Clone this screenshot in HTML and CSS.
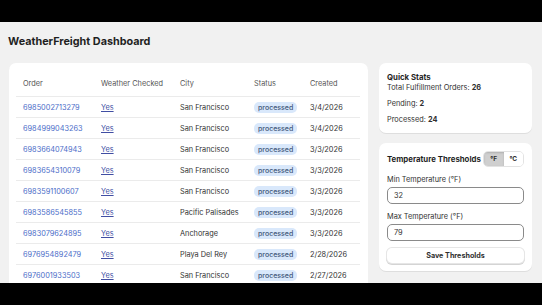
FILE: index.html
```html
<!DOCTYPE html>
<html lang="en">
<head>
  <meta charset="UTF-8" />
  <meta name="viewport" content="width=device-width, initial-scale=1.0" />
  <title>WeatherFreight Dashboard</title>
  <link rel="stylesheet" href="styles.css">
</head>
<body>
  <div class="bar"></div>

  <main class="page">
    <h1>WeatherFreight Dashboard</h1>

    <div class="layout">
      <section class="card orders">
        <table>
          <colgroup>
            <col class="c-order"><col class="c-weather"><col class="c-city"><col class="c-status"><col class="c-created">
          </colgroup>
          <thead>
            <tr><th>Order</th><th>Weather Checked</th><th>City</th><th>Status</th><th>Created</th></tr>
          </thead>
          <tbody>
            <tr><td><a class="order" href="#">6985002713279</a></td><td><a class="yes" href="#">Yes</a></td><td>San Francisco</td><td><span class="pill">processed</span></td><td>3/4/2026</td></tr>
            <tr><td><a class="order" href="#">6984999043263</a></td><td><a class="yes" href="#">Yes</a></td><td>San Francisco</td><td><span class="pill">processed</span></td><td>3/4/2026</td></tr>
            <tr><td><a class="order" href="#">6983664074943</a></td><td><a class="yes" href="#">Yes</a></td><td>San Francisco</td><td><span class="pill">processed</span></td><td>3/3/2026</td></tr>
            <tr><td><a class="order" href="#">6983654310079</a></td><td><a class="yes" href="#">Yes</a></td><td>San Francisco</td><td><span class="pill">processed</span></td><td>3/3/2026</td></tr>
            <tr><td><a class="order" href="#">6983591100607</a></td><td><a class="yes" href="#">Yes</a></td><td>San Francisco</td><td><span class="pill">processed</span></td><td>3/3/2026</td></tr>
            <tr><td><a class="order" href="#">6983586545855</a></td><td><a class="yes" href="#">Yes</a></td><td>Pacific Palisades</td><td><span class="pill">processed</span></td><td>3/3/2026</td></tr>
            <tr><td><a class="order" href="#">6983079624895</a></td><td><a class="yes" href="#">Yes</a></td><td>Anchorage</td><td><span class="pill">processed</span></td><td>3/3/2026</td></tr>
            <tr><td><a class="order" href="#">6976954892479</a></td><td><a class="yes" href="#">Yes</a></td><td>Playa Del Rey</td><td><span class="pill">processed</span></td><td>2/28/2026</td></tr>
            <tr><td><a class="order" href="#">6976001933503</a></td><td><a class="yes" href="#">Yes</a></td><td>San Francisco</td><td><span class="pill">processed</span></td><td>2/27/2026</td></tr>
          </tbody>
        </table>
      </section>

      <aside class="side">
        <section class="card stats">
          <h2>Quick Stats</h2>
          <p class="first">Total Fulfillment Orders: <b>26</b></p>
          <p>Pending: <b>2</b></p>
          <p>Processed: <b>24</b></p>
        </section>

        <section class="card thresholds">
          <div class="head">
            <h2>Temperature Thresholds</h2>
            <div class="toggle">
              <button class="seg active">°F</button>
              <button class="seg">°C</button>
            </div>
          </div>
          <label for="minTemp">Min Temperature (°F)</label>
          <input type="text" id="minTemp" value="32">
          <label for="maxTemp" class="second">Max Temperature (°F)</label>
          <input type="text" id="maxTemp" value="79">
          <button class="save">Save Thresholds</button>
        </section>
      </aside>
    </div>
  </main>

  <div class="bar"></div>
</body>
</html>
```

FILE: styles.css
```css
html, body {
  margin: 0;
  height: 305px;
}
body {
  font-family: Inter, "Noto Sans", sans-serif;
  font-size: 7.35px;
  color: #303030;
  background: #000;
  display: flex;
  flex-direction: column;
  overflow: hidden;
}
.bar {
  height: 22px;
  background: #000;
  flex: none;
}
.page {
  flex: 1;
  background: #f1f1f1;
  padding: 12px 10px 0 9px;
  overflow: hidden;
}
h1 {
  font-size: 10.8px;
  line-height: 16px;
  font-weight: 700;
  margin: 0 0 13px -1px;
  color: #1f1f1f;
}
.layout {
  display: grid;
  grid-template-columns: 1fr 153px;
  gap: 11px;
  align-items: start;
}
.card {
  background: #fff;
  border-radius: 7px;
  box-shadow: 0 1px 0 rgba(0, 0, 0, 0.08);
  padding: 8px;
}
.orders {
  padding: 8px 8px 20px 7px;
}
table {
  width: 344px;
  border-collapse: collapse;
  table-layout: fixed;
}
.c-order { width: 78px; }
.c-weather { width: 79px; }
.c-city { width: 74px; }
.c-status { width: 56px; }
.c-created { width: 57px; }
th {
  text-align: left;
  font-weight: 400;
  color: #555;
  height: 25px;
  padding: 0 0 0 7px;
  border-bottom: 1px solid #ebebeb;
}
td {
  height: 20px;
  padding: 0 0 0 7px;
  border-bottom: 1px solid #ebebeb;
  white-space: nowrap;
}
.order {
  color: #4a6cc8;
  text-decoration: none;
}
.yes {
  color: #404ea3;
  text-decoration: underline;
}
.pill {
  display: inline-block;
  background: #d9e8fb;
  color: #42577a;
  border-radius: 5px;
  padding: 0 4px;
  line-height: 11px;
  font-size: 7px;
  font-weight: 500;
}
.side {
  display: flex;
  flex-direction: column;
  gap: 10px;
}
h2 {
  margin: 0;
  font-size: 7.8px;
  font-weight: 700;
  line-height: 12px;
  color: #1f1f1f;
}
.stats p {
  margin: 6px 0 0;
  line-height: 10px;
}
.stats p.first {
  margin-top: 0;
}
.stats b {
  font-weight: 700;
}
.head {
  display: flex;
  justify-content: space-between;
  align-items: center;
  height: 16px;
}
.toggle {
  display: flex;
  width: 41px;
  height: 16px;
  border: 1px solid #e3e3e3;
  border-radius: 5px;
  overflow: hidden;
  box-sizing: border-box;
}
.seg {
  flex: 1;
  border: none;
  background: #fff;
  font-family: inherit;
  font-size: 6.5px;
  font-weight: 700;
  color: #303030;
  padding: 0;
}
.seg.active {
  background: #cfcfcf;
  box-shadow: inset 0 1px 2px rgba(0, 0, 0, 0.15);
}
label {
  display: block;
  line-height: 10px;
  margin-top: 8px;
  color: #303030;
}
label.second {
  margin-top: 8px;
}
input {
  display: block;
  box-sizing: border-box;
  width: 100%;
  height: 17px;
  margin-top: 2px;
  padding: 0 6px;
  border: 1px solid #8a8a8a;
  border-radius: 5px;
  font-family: inherit;
  font-size: 7.35px;
  color: #303030;
  background: #fff;
}
.save {
  display: block;
  width: 100%;
  height: 15px;
  margin-top: 7px;
  border: none;
  border-radius: 5px;
  background: #fff;
  box-shadow: 0 0 0 1px #e6e6e6, 0 1px 0 1px #d4d4d4;
  font-family: inherit;
  font-size: 7.2px;
  font-weight: 700;
  color: #303030;
  padding: 0;
}
```
